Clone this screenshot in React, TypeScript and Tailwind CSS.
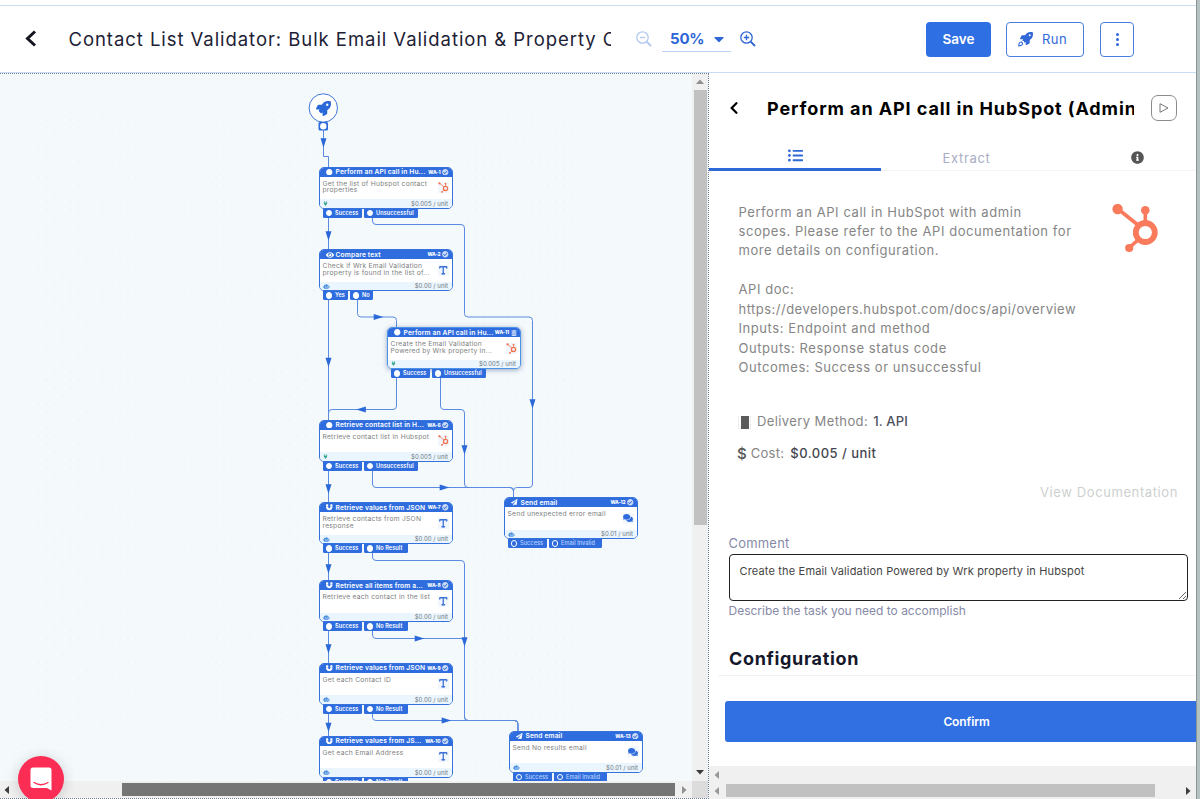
import React from 'react';
import { Type } from 'lucide-react';
import {
  FaCaretDown,
  FaCheckCircle,
  FaChevronLeft,
  FaCircle,
  FaComments,
  FaEye,
  FaInfoCircle,
  FaListUl,
  FaMagnet,
  FaPaperPlane,
  FaPlug,
  FaRobot,
  FaRocket,
  FaTrashAlt,
} from 'react-icons/fa';

type Kind = 'api' | 'compare' | 'json' | 'email';

interface FlowNode {
  id: string;
  x: number;
  y: number;
  kind: Kind;
  title: string;
  text: string;
  cost: string;
  outputs: string[];
  selected?: boolean;
}

const nodes: FlowNode[] = [
  { id: 'WA-1', x: 318.5, y: 92.5, kind: 'api', title: 'Perform an API call in Hu...', text: 'Get the list of Hubspot contact properties', cost: '$0.005 / unit', outputs: ['Success', 'Unsuccessful'] },
  { id: 'WA-2', x: 318.5, y: 175, kind: 'compare', title: 'Compare text', text: 'Check if Wrk Email Validation property is found in the list of...', cost: '$0.00 / unit', outputs: ['Yes', 'No'] },
  { id: 'WA-11', x: 386.5, y: 253, kind: 'api', title: 'Perform an API call in Hu...', text: 'Create the Email Validation Powered by Wrk property in...', cost: '$0.005 / unit', outputs: ['Success', 'Unsuccessful'], selected: true },
  { id: 'WA-6', x: 318.5, y: 345.5, kind: 'api', title: 'Retrieve contact list in H...', text: 'Retrieve contact list in Hubspot', cost: '$0.005 / unit', outputs: ['Success', 'Unsuccessful'] },
  { id: 'WA-7', x: 318.5, y: 428, kind: 'json', title: 'Retrieve values from JSON', text: 'Retrieve contacts from JSON response', cost: '$0.00 / unit', outputs: ['Success', 'No Result'] },
  { id: 'WA-8', x: 318.5, y: 506, kind: 'json', title: 'Retrieve all items from a...', text: 'Retrieve each contact in the list', cost: '$0.00 / unit', outputs: ['Success', 'No Result'] },
  { id: 'WA-9', x: 318.5, y: 588.5, kind: 'json', title: 'Retrieve values from JSON', text: 'Get each Contact ID', cost: '$0.00 / unit', outputs: ['Success', 'No Result'] },
  { id: 'WA-10', x: 318.5, y: 661.5, kind: 'json', title: 'Retrieve values from JS...', text: 'Get each Email Address', cost: '$0.00 / unit', outputs: ['Success', 'No Result'] },
  { id: 'WA-12', x: 503.5, y: 423, kind: 'email', title: 'Send email', text: 'Send unexpected error email', cost: '$0.01 / unit', outputs: ['Success', 'Email Invalid'] },
  { id: 'WA-13', x: 508.5, y: 656.5, kind: 'email', title: 'Send email', text: 'Send No results email', cost: '$0.01 / unit', outputs: ['Success', 'Email Invalid'] },
];

const outputWidths: Record<string, string> = {
  Success: 'w-[39px]',
  Unsuccessful: 'w-[54px]',
  'No Result': 'w-[43.5px]',
  'Email Invalid': 'w-[52.5px]',
  Yes: 'w-[25px]',
  No: 'w-[23px]',
};

const edges = [
  'M323.5 56V82.5H328.5V93',
  'M328.5 143V176',
  'M372.5 143V147Q372.5 150.5 376 150.5H461Q464.5 150.5 464.5 154V239.5Q464.5 243 468 243H529Q532.5 243 532.5 246.5V410Q532.5 413.5 529 413.5H516.5Q513.5 413.5 513.5 417V424',
  'M328.5 226V346',
  'M357.5 226V239.5Q357.5 243 361 243H393Q396.5 243 396.5 246.5V254',
  'M396.5 304V332Q396.5 335.5 393 335.5H332Q328.5 335.5 328.5 339V346',
  'M440.5 304V332Q440.5 335.5 444 335.5H461Q464.5 335.5 464.5 339V410Q464.5 413.5 468 413.5H510Q513.5 413.5 513.5 417V424',
  'M328.5 396V429',
  'M372.5 396V410Q372.5 413.5 376 413.5H510Q513.5 413.5 513.5 417V424',
  'M328.5 479V507',
  'M372.5 479V483Q372.5 486.5 376 486.5H461Q464.5 486.5 464.5 490V643Q464.5 646.5 468 646.5H514.5Q518 646.5 518 650V657',
  'M328.5 557V589',
  'M372.5 557V561Q372.5 564.5 376 564.5H461Q464.5 564.5 464.5 568V643Q464.5 646.5 468 646.5H514.5Q518 646.5 518 650V657',
  'M328.5 640V662',
  'M372.5 640V643.5Q372.5 646.5 376 646.5H514.5Q518 646.5 518 650V657',
];

// x, y, rotation
const arrows: [number, number, number][] = [
  [323.5, 69, 0],
  [328.5, 162, 0],
  [328.5, 288.5, 0],
  [378.5, 243, -90],
  [361, 335.5, 90],
  [464.5, 376, 0],
  [532.5, 330, 0],
  [328.5, 415, 0],
  [444.5, 413.5, -90],
  [328.5, 495, 0],
  [419.5, 564.5, -90],
  [464.5, 568, 0],
  [328.5, 575, 0],
  [446.5, 646.5, -90],
  [328.5, 653.5, 0],
];

function NodeIcon({ kind }: { kind: Kind }) {
  if (kind === 'compare') return <FaEye className="size-[8px]" />;
  if (kind === 'json') return <FaMagnet className="size-[6.5px]" />;
  if (kind === 'email') return <FaPaperPlane className="size-[6.5px]" />;
  return <FaCircle className="size-[6.5px]" />;
}

function NodeBadge({ kind }: { kind: Kind }) {
  if (kind === 'api') return <HubspotMark className="size-[11px] text-[#f4714f]" />;
  if (kind === 'email') return <FaComments className="size-[10px] text-[#2f6bdc]" />;
  return <Type className="size-[10.5px] text-[#3f72d6]" strokeWidth={3} />;
}

function HubspotMark({ className }: { className?: string }) {
  return (
    <svg viewBox="0 0 48 50" className={className} fill="none" stroke="currentColor">
      <circle cx="33.3" cy="29.5" r="9.5" strokeWidth="5.8" />
      <path d="M6 6L26 22M33.3 7v13M26.5 36.5L17.5 44.5" strokeWidth="3.6" />
      <g fill="currentColor" stroke="none">
        <circle cx="5.6" cy="6" r="5.2" />
        <circle cx="33.3" cy="7.2" r="4.3" />
        <circle cx="17.2" cy="45" r="4.1" />
      </g>
    </svg>
  );
}

function Node({ node }: { node: FlowNode }) {
  const hollow = node.kind === 'email';
  return (
    <div className="absolute w-[134.5px]" style={{ left: node.x, top: node.y }}>
      <div
        className={`flex h-[42px] flex-col overflow-hidden rounded-[5px] border bg-white ${
          node.selected ? 'border-[#4b93e6] shadow-[0_1px_5px_rgba(30,60,120,0.45)]' : 'border-[#3672dc]'
        }`}
      >
        <div className="flex h-[9px] shrink-0 items-center bg-[#2f6ddf] pr-[3.5px] pl-[5.5px] text-white">
          <span className="flex w-[9px] justify-center">
            <NodeIcon kind={node.kind} />
          </span>
          <span className="ml-[1.5px] flex-1 text-[6.7px] leading-[8px] font-semibold tracking-[0.13px] whitespace-nowrap">{node.title}</span>
          <span className="mr-[1.5px] text-[4.8px] leading-[9px] font-extrabold tracking-[-0.12px]">{node.id}</span>
          {node.selected ? <FaTrashAlt className="size-[6px] opacity-75" /> : <FaCheckCircle className="size-[6.5px] opacity-75" />}
        </div>
        <div className="flex flex-1 items-start justify-between pr-[3.5px] pl-[3px]">
          <p className="w-[112px] pt-[4px] text-[6.7px] leading-[6.8px] tracking-[0.26px] text-[#7d8080]">{node.text}</p>
          <span className="mt-[5.5px] flex size-[11px] items-center justify-center bg-[#f1f7fd]">
            <NodeBadge kind={node.kind} />
          </span>
        </div>
        <div className="flex h-[8.5px] shrink-0 items-center justify-between bg-[#eaf5fd] pr-[4px] pl-[3.5px]">
          {node.kind === 'api' ? <FaPlug className="size-[5px] text-[#36a692]" /> : <FaRobot className="size-[6.5px] text-[#4f92de]" />}
          <span className="pt-[1px] text-[6px] leading-[8px] tracking-[0.05px] text-[#707880]">{node.cost}</span>
        </div>
      </div>
      <div className="flex gap-[2px] pl-[4.5px]">
        {node.outputs.map((output) => (
          <span
            key={output}
            className={`flex h-[9px] items-center gap-[3px] rounded-b-[1.5px] bg-[#2f6ddf] pl-[2.5px] ${outputWidths[output]}`}
          >
            <span className={`size-[6.5px] shrink-0 rounded-full border border-white ${hollow ? '' : 'bg-white'}`} />
            <span
              className={`pt-[0.5px] text-[5.6px] leading-[9px] tracking-[0.05px] whitespace-nowrap ${
                hollow ? 'font-medium text-[#b9d2fa]' : 'font-semibold text-white'
              }`}
            >
              {output}
            </span>
          </span>
        ))}
      </div>
    </div>
  );
}

function Magnifier({ plus, className }: { plus?: boolean; className?: string }) {
  return (
    <svg viewBox="0 0 16 16" className={className} fill="none" stroke="currentColor" strokeWidth="1.3">
      <circle cx="6.5" cy="6.5" r="5.7" />
      <path d="M10.7 10.7L15 15" strokeWidth="1.9" />
      <path d={plus ? 'M3.8 6.5h5.4M6.5 3.8v5.4' : 'M3.8 6.5h5.4'} />
    </svg>
  );
}

function Triangle({ className }: { className?: string }) {
  return (
    <svg viewBox="0 0 8 8" className={className} fill="currentColor">
      <path d="M6 0v8L1.5 4z" />
    </svg>
  );
}

function Header() {
  return (
    <header className="mt-[5px] flex h-[68px] shrink-0 items-center border-y border-[#c9dcf3] bg-white">
      <svg viewBox="0 0 12 18" className="ml-[25px] h-[18px] w-[12px] text-[#14161f]" fill="none" stroke="currentColor" strokeWidth="3">
        <path d="M10 1.500L2.500 8.500L10 15.500" />
      </svg>
      <h1 className="ml-[31.5px] w-[542.5px] overflow-hidden text-[18.5px] leading-7 tracking-[0.94px] whitespace-nowrap text-[#1c2135]">
        Contact List Validator: Bulk Email Validation &amp; Property Configuration
      </h1>
      <Magnifier className="ml-[25px] size-[16px] text-[#b3c8f0]" />
      <button className="ml-[10px] flex h-[25px] w-[69px] items-center justify-between border-b border-[#bcd3f5] pr-[4px] pl-[8px] text-[#2f66d6]">
        <span className="text-[15px] leading-5 font-bold tracking-[-0.2px]">50%</span>
        <FaCaretDown className="size-[16px]" />
      </button>
      <Magnifier plus className="ml-[9px] size-[16px] text-[#2f66d6]" />
      <button className="ml-[170px] h-[35px] w-[65px] rounded-[4px] bg-[#2f6fe4] text-[13.5px] font-semibold text-white">Save</button>
      <button className="ml-[15px] flex h-[35px] w-[78px] items-center rounded-[4px] border border-[#4a7fe0] pl-[11px] text-[#3167d8]">
        <span className="relative flex size-[15px] items-start justify-end">
          <FaRocket className="size-[13px]" />
          <svg viewBox="0 0 6 6" className="absolute bottom-0 left-0 size-[5.5px] bg-white" fill="none" stroke="currentColor" strokeWidth="1.2">
            <path d="M0.7 6L1.2 2.6Q2 0.8 4 1.2Q5.5 2 4.7 4Q3.5 5.3 1.5 5" />
          </svg>
        </span>
        <span className="mt-px ml-[9px] text-[13px] tracking-[0.5px]">Run</span>
      </button>
      <button className="ml-[16px] flex h-[35px] w-[34px] flex-col items-center justify-center gap-[2px] rounded-[4px] border border-[#4a7fe0]">
        <span className="size-[3px] rounded-full bg-[#2f66d6]" />
        <span className="size-[3px] rounded-full bg-[#2f66d6]" />
        <span className="size-[3px] rounded-full bg-[#2f66d6]" />
      </button>
    </header>
  );
}

function Canvas() {
  return (
    <section className="flex w-[709px] shrink-0 flex-col border-y border-r border-dotted border-[#6f7f8f]">
      <div className="flex min-h-0 flex-1">
        <div className="relative w-[692px] overflow-hidden bg-[#f4f9fc] bg-[radial-gradient(circle,#ebf1f5_0.7px,transparent_1px)] bg-[size:8.1px_8.1px] bg-[position:2px_2px]">
          <svg viewBox="0 0 692 707" className="absolute top-0 left-0 h-[707px] w-[692px]" fill="none">
            <g stroke="#5a8be0" strokeWidth="1">
              {edges.map((d) => (
                <path key={d} d={d} />
              ))}
            </g>
            {arrows.map(([x, y, r]) => (
              <path key={`${x}-${y}`} d="M-3 -4.8H3L0 4.8Z" transform={`translate(${x} ${y}) rotate(${r})`} fill="#2b68d8" />
            ))}
            <circle cx="323.3" cy="34" r="14.2" fill="#fff" stroke="#3f76d6" />
            <rect x="318.5" y="48" width="9.5" height="8.5" rx="1.5" fill="#2b68d8" />
            <circle cx="323.3" cy="52.2" r="3.2" fill="#fff" />
          </svg>
          <FaRocket className="absolute top-[26.5px] left-[315.5px] size-[15px] text-[#2b68d8]" />
          {nodes.map((node) => (
            <Node key={node.id} node={node} />
          ))}
        </div>
        <div className="flex w-[16px] flex-col items-center bg-[#f0f0f0]">
          <Triangle className="mt-[4px] h-[8px] w-[8px] rotate-90 text-[#8f8f8f]" />
          <div className="mt-[4px] h-[435px] w-[13px] bg-[#c1c1c1]" />
          <Triangle className="mt-auto mb-[5px] size-[8px] -rotate-90 text-[#3d3d3d]" />
        </div>
      </div>
      <div className="flex h-[17px] shrink-0 items-center bg-[#f0f0f0]">
        <Triangle className="ml-[3px] size-[8px] text-[#3d3d3d]" />
        <div className="ml-[111px] h-[13px] w-[553px] bg-[#757575]" />
        <Triangle className="ml-[5px] size-[8px] rotate-180 text-[#8f8f8f]" />
        <div className="ml-auto h-full w-[16px] bg-[#dcdcdc]" />
      </div>
    </section>
  );
}

function TaskPanel() {
  return (
    <aside className="flex w-[487px] shrink-0 flex-col overflow-hidden bg-white">
      <div className="flex h-[70px] shrink-0 items-center">
        <FaChevronLeft className="ml-[19px] h-[14px] w-[12px] text-black" />
        <h2 className="mt-px ml-[27px] w-[367px] overflow-hidden text-[18px] leading-7 font-bold tracking-[0.9px] whitespace-nowrap text-black">
          Perform an API call in HubSpot (Admin)
        </h2>
        <button className="ml-[17px] flex size-[26px] items-center justify-center rounded-[7px] border border-[#8b8b8b]">
          <svg viewBox="0 0 10 10" className="size-[10px]" fill="none" stroke="#777">
            <path d="M1 0.7L9 5L1 9.3Z" />
          </svg>
        </button>
      </div>

      <div className="flex h-[28px] shrink-0 border-b border-[#f3f4f8]">
        <div className="flex h-[28px] w-[172px] shrink-0 items-center justify-center border-b-[3px] border-[#2f69d8] pb-[1px]">
          <FaListUl className="size-[15px] text-[#2f69d8]" />
        </div>
        <div className="flex w-[171px] shrink-0 items-center justify-center pt-[4px] text-[13px] tracking-[0.65px] text-[#a9adc6]">Extract</div>
        <div className="flex w-[171px] shrink-0 items-center justify-center pt-[2px]">
          <FaInfoCircle className="size-[13px] text-[#555]" />
        </div>
      </div>

      <div className="flex h-[205px] shrink-0 items-start px-[29px] pt-[31.5px]">
        <p className="w-[352px] shrink-0 pl-[0.5px] text-[13px] leading-[19.48px] tracking-[0.57px] text-[#858585]">
          Perform an API call in HubSpot with admin
          <br />
          scopes. Please refer to the API documentation for
          <br />
          more details on configuration.
          <br />
          <br />
          API doc:
          <br />
          <span className="tracking-[0.48px]">https://developers.hubspot.com/docs/api/overview</span>
          <br />
          Inputs: Endpoint and method
          <br />
          Outputs: Response status code
          <br />
          Outcomes: Success or unsuccessful
        </p>
        <HubspotMark className="ml-[21.5px] h-[50px] w-[48px] shrink-0 text-[#fa7a5c]" />
      </div>

      <div className="mt-[36px] flex h-[20px] shrink-0 items-center pl-[29px] text-[13px] text-[#858585]">
        <span className="flex h-[13px] w-[13px] justify-center border-x border-dotted border-[#ddd]">
          <span className="h-full w-[8px] bg-[#5b5b5b]" />
        </span>
        <span className="ml-[6px] tracking-[0.4px]">Delivery Method:</span>
        <span className="ml-[5px] font-medium tracking-[0.18px] text-[#4d4f5a]">1. API</span>
      </div>
      <div className="mt-[12px] flex h-[20px] shrink-0 items-center pl-[28px] text-[13px] text-[#858585]">
        <span className="text-[15px] font-medium text-[#555]">$</span>
        <span className="ml-[4px] tracking-[0.3px]">Cost:</span>
        <span className="ml-[6px] font-medium tracking-[0.47px] text-[#44464f]">$0.005 / unit</span>
      </div>
      <div className="mt-[18px] shrink-0 pr-[18px] text-right text-[13px] leading-[20px] tracking-[0.6px] text-[#cdd1d0]">View Documentation</div>

      <div className="mt-[31px] flex shrink-0 flex-col pl-[19.5px]">
        <label className="text-[13px] leading-[20px] tracking-[0.2px] text-[#868aa8]">Comment</label>
        <textarea
          className="mt-[1px] h-[47px] w-[459px] resize rounded-[4px] border border-[#222] px-[10px] py-[8px] text-[11px] leading-[16px] tracking-[0.165px] text-[#444]"
          defaultValue="Create the Email Validation Powered by Wrk property in Hubspot"
        />
        <p className="text-[12px] leading-[19px] tracking-[-0.01px] text-[#868aa8]">Describe the task you need to accomplish</p>
      </div>

      <h3 className="mt-[25px] shrink-0 pl-[20px] text-[18px] leading-[28px] font-bold tracking-[0.65px] text-[#15172b]">Configuration</h3>
      <div className="mt-[2px] ml-[9px] h-px shrink-0 bg-[#f1f3f7]" />
      <button className="mt-[25px] ml-[16px] h-[41px] shrink-0 rounded-l-[3px] bg-[#3070e3] pl-[12px] text-[12px] font-semibold tracking-[-0.12px] text-white">
        Confirm
      </button>
      <div className="mt-auto flex h-[33px] shrink-0 flex-col bg-[#f0f0f0]">
        <div className="flex h-[17px] items-center">
          <Triangle className="ml-[4px] size-[8px] text-[#999]" />
        </div>
        <div className="flex h-[15px] items-center">
          <Triangle className="ml-[4px] size-[8px] text-[#999]" />
          <div className="ml-[5px] h-[13px] w-[429px] bg-[#c1c1c1]" />
          <Triangle className="mr-[4px] ml-auto size-[8px] rotate-180 text-[#3d3d3d]" />
        </div>
      </div>
    </aside>
  );
}

export default function App() {
  return (
    <div className="flex h-[799px] w-[1200px] overflow-hidden bg-white font-[Inter,sans-serif]">
      <div className="relative flex w-[1196px] flex-col">
        <Header />
        <main className="flex min-h-0 flex-1">
          <Canvas />
          <TaskPanel />
        </main>
        <div className="absolute top-[756px] left-[18px] flex size-[46px] items-center justify-center rounded-full bg-[#fb2d54] shadow-[0_2px_14px_rgba(0,0,0,0.18)]">
          <svg viewBox="0 0 22 24" className="size-[24px]">
            <path d="M3 0.5H19Q21.5 0.5 21.5 3V23.5L17 21H3Q0.5 21 0.5 18.5V3Q0.5 0.5 3 0.5Z" fill="#fff" />
            <path d="M4 15.5Q11 20 18 15.5" fill="none" stroke="#fb2d54" strokeWidth="1.3" strokeLinecap="round" />
          </svg>
        </div>
      </div>
      <div className="w-[4px] border-l border-[#8b9494] bg-[#b4c2c1]" />
    </div>
  );
}
